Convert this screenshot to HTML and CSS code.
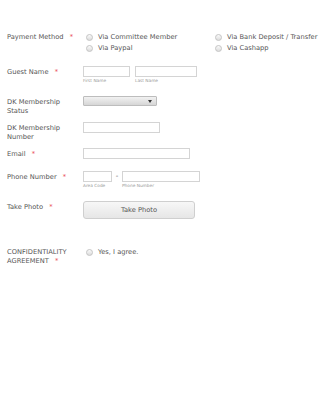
FILE: index.html
```html
<!DOCTYPE html>
<html>

<head>
    <meta name="viewport" content="width=device-width, initial-scale=1.0">
    <title>DK Guest Form</title>
    <link rel="stylesheet" href="styles.css">
</head>

<body>
    <form class="form">
        <div class="row row-payment">
            <label class="label">Payment Method <span class="req">*</span></label>
            <div class="radios">
                <div class="radio"><span class="dot"></span>Via Committee Member</div>
                <div class="radio"><span class="dot"></span>Via Bank Deposit / Transfer</div>
                <div class="radio"><span class="dot"></span>Via Paypal</div>
                <div class="radio"><span class="dot"></span>Via Cashapp</div>
            </div>
        </div>

        <div class="row row-guest">
            <label class="label">Guest Name <span class="req">*</span></label>
            <div class="group">
                <div class="sub">
                    <input type="text" class="input first">
                    <span class="hint">First Name</span>
                </div>
                <div class="sub">
                    <input type="text" class="input last">
                    <span class="hint">Last Name</span>
                </div>
            </div>
        </div>

        <div class="row row-status">
            <label class="label">DK Membership<br>Status</label>
            <div class="select"><span class="arrow"></span></div>
        </div>

        <div class="row row-number">
            <label class="label">DK Membership<br>Number</label>
            <input type="text" class="input number">
        </div>

        <div class="row row-email">
            <label class="label">Email <span class="req">*</span></label>
            <input type="text" class="input email">
        </div>

        <div class="row row-phone">
            <label class="label">Phone Number <span class="req">*</span></label>
            <div class="group phone-group">
                <div class="sub">
                    <input type="text" class="input area">
                    <span class="hint">Area Code</span>
                </div>
                <span class="dash">-</span>
                <div class="sub">
                    <input type="text" class="input phone">
                    <span class="hint">Phone Number</span>
                </div>
            </div>
        </div>

        <div class="row row-photo">
            <label class="label">Take Photo <span class="req">*</span></label>
            <button type="button" class="photo-btn">Take Photo</button>
        </div>

        <div class="row row-agree">
            <label class="label">CONFIDENTIALITY<br>AGREEMENT <span class="req">*</span></label>
            <div class="radio agree"><span class="dot"></span>Yes, I agree.</div>
        </div>
    </form>
</body>

</html>
```

FILE: styles.css
```css
html {
    background-color: white;
}

body {
    margin: 0;
    padding: 31px 0 0 7px;
    font-family: "DejaVu Sans", Verdana, sans-serif;
    font-size: 6.7px;
    color: #555;
}

.row {
    display: flex;
    align-items: flex-start;
}

.label {
    width: 76px;
    flex: none;
    padding-top: 2px;
    line-height: 9px;
    color: #555;
}

.req {
    color: #e8434d;
    margin-left: 4px;
}

/* spacing between the rows */
.row-payment {
    margin-bottom: 13px;
}

.row-guest {
    margin-bottom: 13px;
}

.row-status {
    margin-bottom: 6px;
}

.row-number {
    margin-bottom: 6px;
}

.row-email {
    margin-bottom: 12px;
}

.row-phone {
    margin-bottom: 13px;
}

.row-photo {
    margin-bottom: 27px;
}

.radios {
    display: grid;
    grid-template-columns: 129px auto;
}

.radio {
    display: flex;
    align-items: center;
    height: 10px;
    line-height: 10px;
    padding-top: 1px;
    white-space: nowrap;
}

.dot {
    width: 5px;
    height: 5px;
    margin: 0 5px 0 3px;
    border: 1px solid #c4c4c4;
    border-radius: 50%;
    background: linear-gradient(#fafafa, #dcdcdc);
}

.agree {
    padding-top: 1px;
}

.input {
    display: block;
    box-sizing: border-box;
    height: 11px;
    margin: 0;
    padding: 0;
    border: 1px solid #d4d4d4;
    background: white;
}

.first {
    width: 47px;
}

.last {
    width: 62px;
}

.number {
    width: 77px;
}

.email {
    width: 107px;
}

.area {
    width: 29px;
}

.phone {
    width: 78px;
}

.group {
    display: flex;
    gap: 5px;
}

.phone-group {
    gap: 3px;
}

.hint {
    display: block;
    margin-top: 1px;
    font-size: 4.3px;
    line-height: 5px;
    color: #999;
}

.dash {
    line-height: 10px;
    width: 4px;
    text-align: center;
    font-size: 7px;
}

.select {
    position: relative;
    box-sizing: border-box;
    width: 74px;
    height: 10px;
    border: 1px solid #bdbdbd;
    border-radius: 1px;
    background: linear-gradient(#f2f2f2, #d6d6d6);
}

.select .arrow {
    position: absolute;
    right: 4px;
    top: 3px;
    width: 0;
    height: 0;
    border-left: 2px solid transparent;
    border-right: 2px solid transparent;
    border-top: 3px solid #333;
}

.photo-btn {
    box-sizing: border-box;
    width: 112px;
    height: 18px;
    margin: 0;
    padding: 0;
    border: 1px solid #cfcfcf;
    border-radius: 3px;
    background: linear-gradient(#f7f7f7, #e6e6e6);
    font-family: "DejaVu Sans", Verdana, sans-serif;
    font-size: 6.7px;
    color: #555;
}
```
